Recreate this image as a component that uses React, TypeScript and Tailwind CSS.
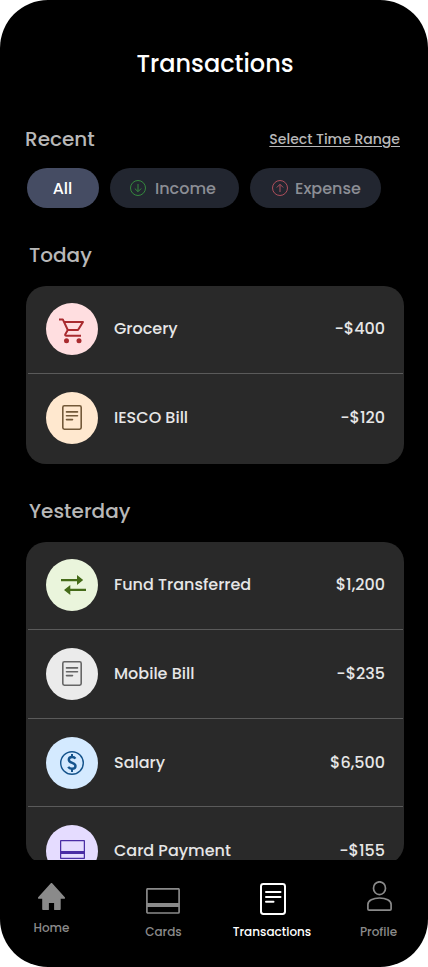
import type { ReactNode } from "react";

type Transaction = {
  name: string;
  amount: string;
  rowClass: string;
  circleClass: string;
  icon: ReactNode;
};

function CartIcon() {
  return (
    <svg width="26" height="26" viewBox="0 0 26 26" fill="none" stroke="#a92b2f" strokeWidth="2" className="mt-[3px]">
      <path d="M0 1.400h3.800l5 10.600h10.200L24 4H5.200" strokeLinejoin="round" />
      <path d="M8.800 12 6.200 16.400q-.2 1.400 1 1.400H22" strokeLinejoin="round" />
      <circle cx="7.500" cy="22.700" r="2.500" fill="#a92b2f" stroke="none" />
      <circle cx="20" cy="22.700" r="2.500" fill="#a92b2f" stroke="none" />
    </svg>
  );
}

function BillIcon({ className }: { className: string }) {
  return (
    <svg width="20" height="25" viewBox="0 0 20 25" fill="none" stroke="currentColor" strokeWidth="1.600" className={`-mt-px ${className}`}>
      <rect x=".8" y=".8" width="18.400" height="23.400" rx="1.600" />
      <path d="M4.500 6.900h11M4.500 10.800h11M4.500 14.600h6" strokeLinecap="round" />
    </svg>
  );
}

function TransferIcon() {
  return (
    <svg width="26" height="20" viewBox="0 0 26 20" fill="#456b19" className="ml-[3px]">
      <path d="M0 3.900h16V0l6.200 4.900-6.200 5V6.200H0zM25 13.800H9.300V10L3 15l6.300 5v-3.900H25z" />
    </svg>
  );
}

function DollarIcon() {
  return (
    <svg width="24" height="24" viewBox="0 0 24 24" fill="none" stroke="#15548c">
      <circle cx="12" cy="12" r="11.300" strokeWidth="1.400" />
      <path d="M15.400 7.600C14.700 6.500 13.600 6 12 6c-2 0-3.200 1.100-3.200 2.700 0 3.900 6.700 2.600 6.700 6.200 0 1.800-1.400 2.800-3.500 2.800-1.800 0-3-.6-3.800-1.900" strokeWidth="2.400" />
      <path d="M12 3v3M12 18v3" strokeWidth="2" />
    </svg>
  );
}

function CardIcon() {
  return (
    <svg width="25" height="19" viewBox="0 0 25 19" fill="none" stroke="#4a2da5" className="-mt-[3px] ml-px">
      <rect x=".6" y=".6" width="23.800" height="17.800" rx=".6" strokeWidth="1.300" />
      <path d="M.5 12.500h24" strokeWidth="3" />
    </svg>
  );
}

const today: Transaction[] = [
  { name: "Grocery", amount: "-$400", rowClass: "pt-[17px] pb-[18px]", circleClass: "bg-[#ffdee0]", icon: <CartIcon /> },
  { name: "IESCO Bill", amount: "-$120", rowClass: "pt-[18px] pb-5", circleClass: "bg-[#ffe8cf]", icon: <BillIcon className="text-[#735939]" /> },
];

const yesterday: Transaction[] = [
  { name: "Fund Transferred", amount: "$1,200", rowClass: "pt-[17px] pb-[18px]", circleClass: "bg-[#eaf5dc]", icon: <TransferIcon /> },
  { name: "Mobile Bill", amount: "-$235", rowClass: "pt-[18px] pb-[18px]", circleClass: "bg-[#ebebeb]", icon: <BillIcon className="text-[#666666]" /> },
  { name: "Salary", amount: "$6,500", rowClass: "pt-[18px] pb-[17px]", circleClass: "bg-[#d4eaff]", icon: <DollarIcon /> },
  { name: "Card Payment", amount: "-$155", rowClass: "h-[57px] pt-[18px]", circleClass: "bg-[#e5dcff]", icon: <CardIcon /> },
];

function TransactionList({ items }: { items: Transaction[] }) {
  return (
    <div className="ml-[26px] w-[378px] shrink-0 overflow-hidden rounded-[20px] bg-[#292929]">
      {items.map((t, i) => (
        <div key={t.name}>
          {i > 0 && <div className="mr-px ml-0.5 h-px bg-[#5a5a5a]" />}
          <div className={`flex items-start pr-[19px] pl-5 text-base font-medium text-[#e6e6e6] ${t.rowClass}`}>
            <div className={`flex size-[52px] shrink-0 items-center justify-center rounded-full ${t.circleClass}`}>{t.icon}</div>
            <div className="mt-[15px] ml-4 flex grow justify-between leading-[22px] whitespace-nowrap">
              <span>{t.name}</span>
              <span>{t.amount}</span>
            </div>
          </div>
        </div>
      ))}
    </div>
  );
}

function ArrowCircle({ up, className }: { up?: boolean; className: string }) {
  return (
    <svg width="16" height="16" viewBox="0 0 16 16" fill="none" stroke="currentColor" strokeWidth="1" className={className}>
      <circle cx="8" cy="8" r="7.500" />
      {up ? <path d="M8 12V4.500M4.800 7.500 8 4.300l3.200 3.200" /> : <path d="M8 4v7.500M4.800 8.500 8 11.700l3.200-3.200" />}
    </svg>
  );
}

function NavItem({ label, className, labelClass = "", children }: { label: string; className: string; labelClass?: string; children: ReactNode }) {
  return (
    <div className={`flex flex-col items-center ${className}`}>
      {children}
      <span className={`mt-auto text-xs leading-4 whitespace-nowrap ${labelClass}`}>{label}</span>
    </div>
  );
}

export default function App() {
  return (
    <div className="h-[967px] w-[428px] bg-white">
      <div className="flex h-full flex-col overflow-hidden rounded-[48px] bg-black font-['Poppins','Inter',sans-serif] antialiased [font-feature-settings:'cv11']">
        <main className="flex h-[860px] flex-col overflow-hidden">
          <h1 className="mt-[46px] h-9 pl-0.5 text-center text-2xl leading-9 font-medium text-white">Transactions</h1>
          <div className="mt-[42px] flex h-[30px] items-center justify-between pr-7 pl-[25px] font-medium text-[#b8b8b8]">
            <h2 className="text-xl leading-[30px]">Recent</h2>
            <a className="text-sm leading-[30px] underline decoration-1 underline-offset-2">Select Time Range</a>
          </div>
          <div className="mt-3.5 flex gap-[11px] pl-[27px] text-base leading-[42px] font-medium">
            <button className="h-10 w-[72px] rounded-full bg-[#454c63] pr-px text-white">All</button>
            <button className="flex h-10 w-[129px] items-center rounded-full bg-[#222630] pl-5 text-[#8c8e95]">
              <ArrowCircle className="text-[#36893e]" />
              <span className="mt-0.5 ml-[9px]">Income</span>
            </button>
            <button className="flex h-10 w-[131px] items-center rounded-full bg-[#222630] pl-[22px] text-[#8c8e95]">
              <ArrowCircle up className="text-[#ad4f5c]" />
              <span className="mt-0.5 ml-[7px]">Expense</span>
            </button>
          </div>
          <h2 className="mt-8 mb-4 ml-[29px] text-xl leading-[30px] font-medium text-[#b8b8b8]">Today</h2>
          <TransactionList items={today} />
          <h2 className="mt-8 mb-4 ml-[29px] text-xl leading-[30px] font-medium text-[#b8b8b8]">Yesterday</h2>
          <TransactionList items={yesterday} />
        </main>
        <nav className="flex h-[107px] items-start font-medium text-[#8a8a8a]">
          <NavItem label="Home" className="ml-[21px] h-[76px] w-[60px] pt-[23px]" labelClass="pl-px">
            <svg width="27" height="27" viewBox="0 0 27 27" fill="currentColor">
              <path d="M12.600.4a1.200 1.200 0 0 1 1.800 0L26.600 14c.8.9.4 1.800-.6 1.800h-3.300v10.400q0 .8-.8.8h-5.200q-.6 0-.6-.6V20h-5.200v6.400q0 .6-.6.6H5q-.8 0-.8-.8V15.800H1c-1 0-1.400-.9-.6-1.800z" />
            </svg>
          </NavItem>
          <NavItem label="Cards" className="ml-[52px] h-20 w-[60px] pt-7" labelClass="pl-px">
            <svg width="34" height="26" viewBox="0 0 34 26" fill="none" stroke="currentColor">
              <rect x=".9" y=".8" width="32.200" height="24.200" rx="1" strokeWidth="1.700" />
              <path d="M1 17h32" strokeWidth="4" />
            </svg>
          </NavItem>
          <NavItem label="Transactions" className="ml-[34px] h-20 w-[90px] pt-[23px] text-white">
            <svg width="26" height="32" viewBox="0 0 26 32" fill="none" stroke="currentColor" strokeWidth="2" className="ml-0.5">
              <rect x="1" y="1" width="24" height="30" rx="2.400" />
              <path d="M6 9h14.500M6 14h14.500M6 18.700h7.500" strokeLinecap="round" />
            </svg>
          </NavItem>
          <NavItem label="Profile" className="ml-[31px] h-20 w-[60px] pt-[21px]" labelClass="pl-px">
            <svg width="25" height="31" viewBox="0 0 25 31" fill="none" stroke="currentColor" strokeWidth="1.700" className="ml-0.5">
              <ellipse cx="12.500" cy="7.200" rx="6" ry="6.400" />
              <path d="M.9 28V23.500C.9 19.500 6 17 12.500 17s11.600 2.500 11.600 6.500V28q0 1.200-1.200 1.200H2.100Q.9 29.200.9 28z" />
            </svg>
          </NavItem>
        </nav>
      </div>
    </div>
  );
}
